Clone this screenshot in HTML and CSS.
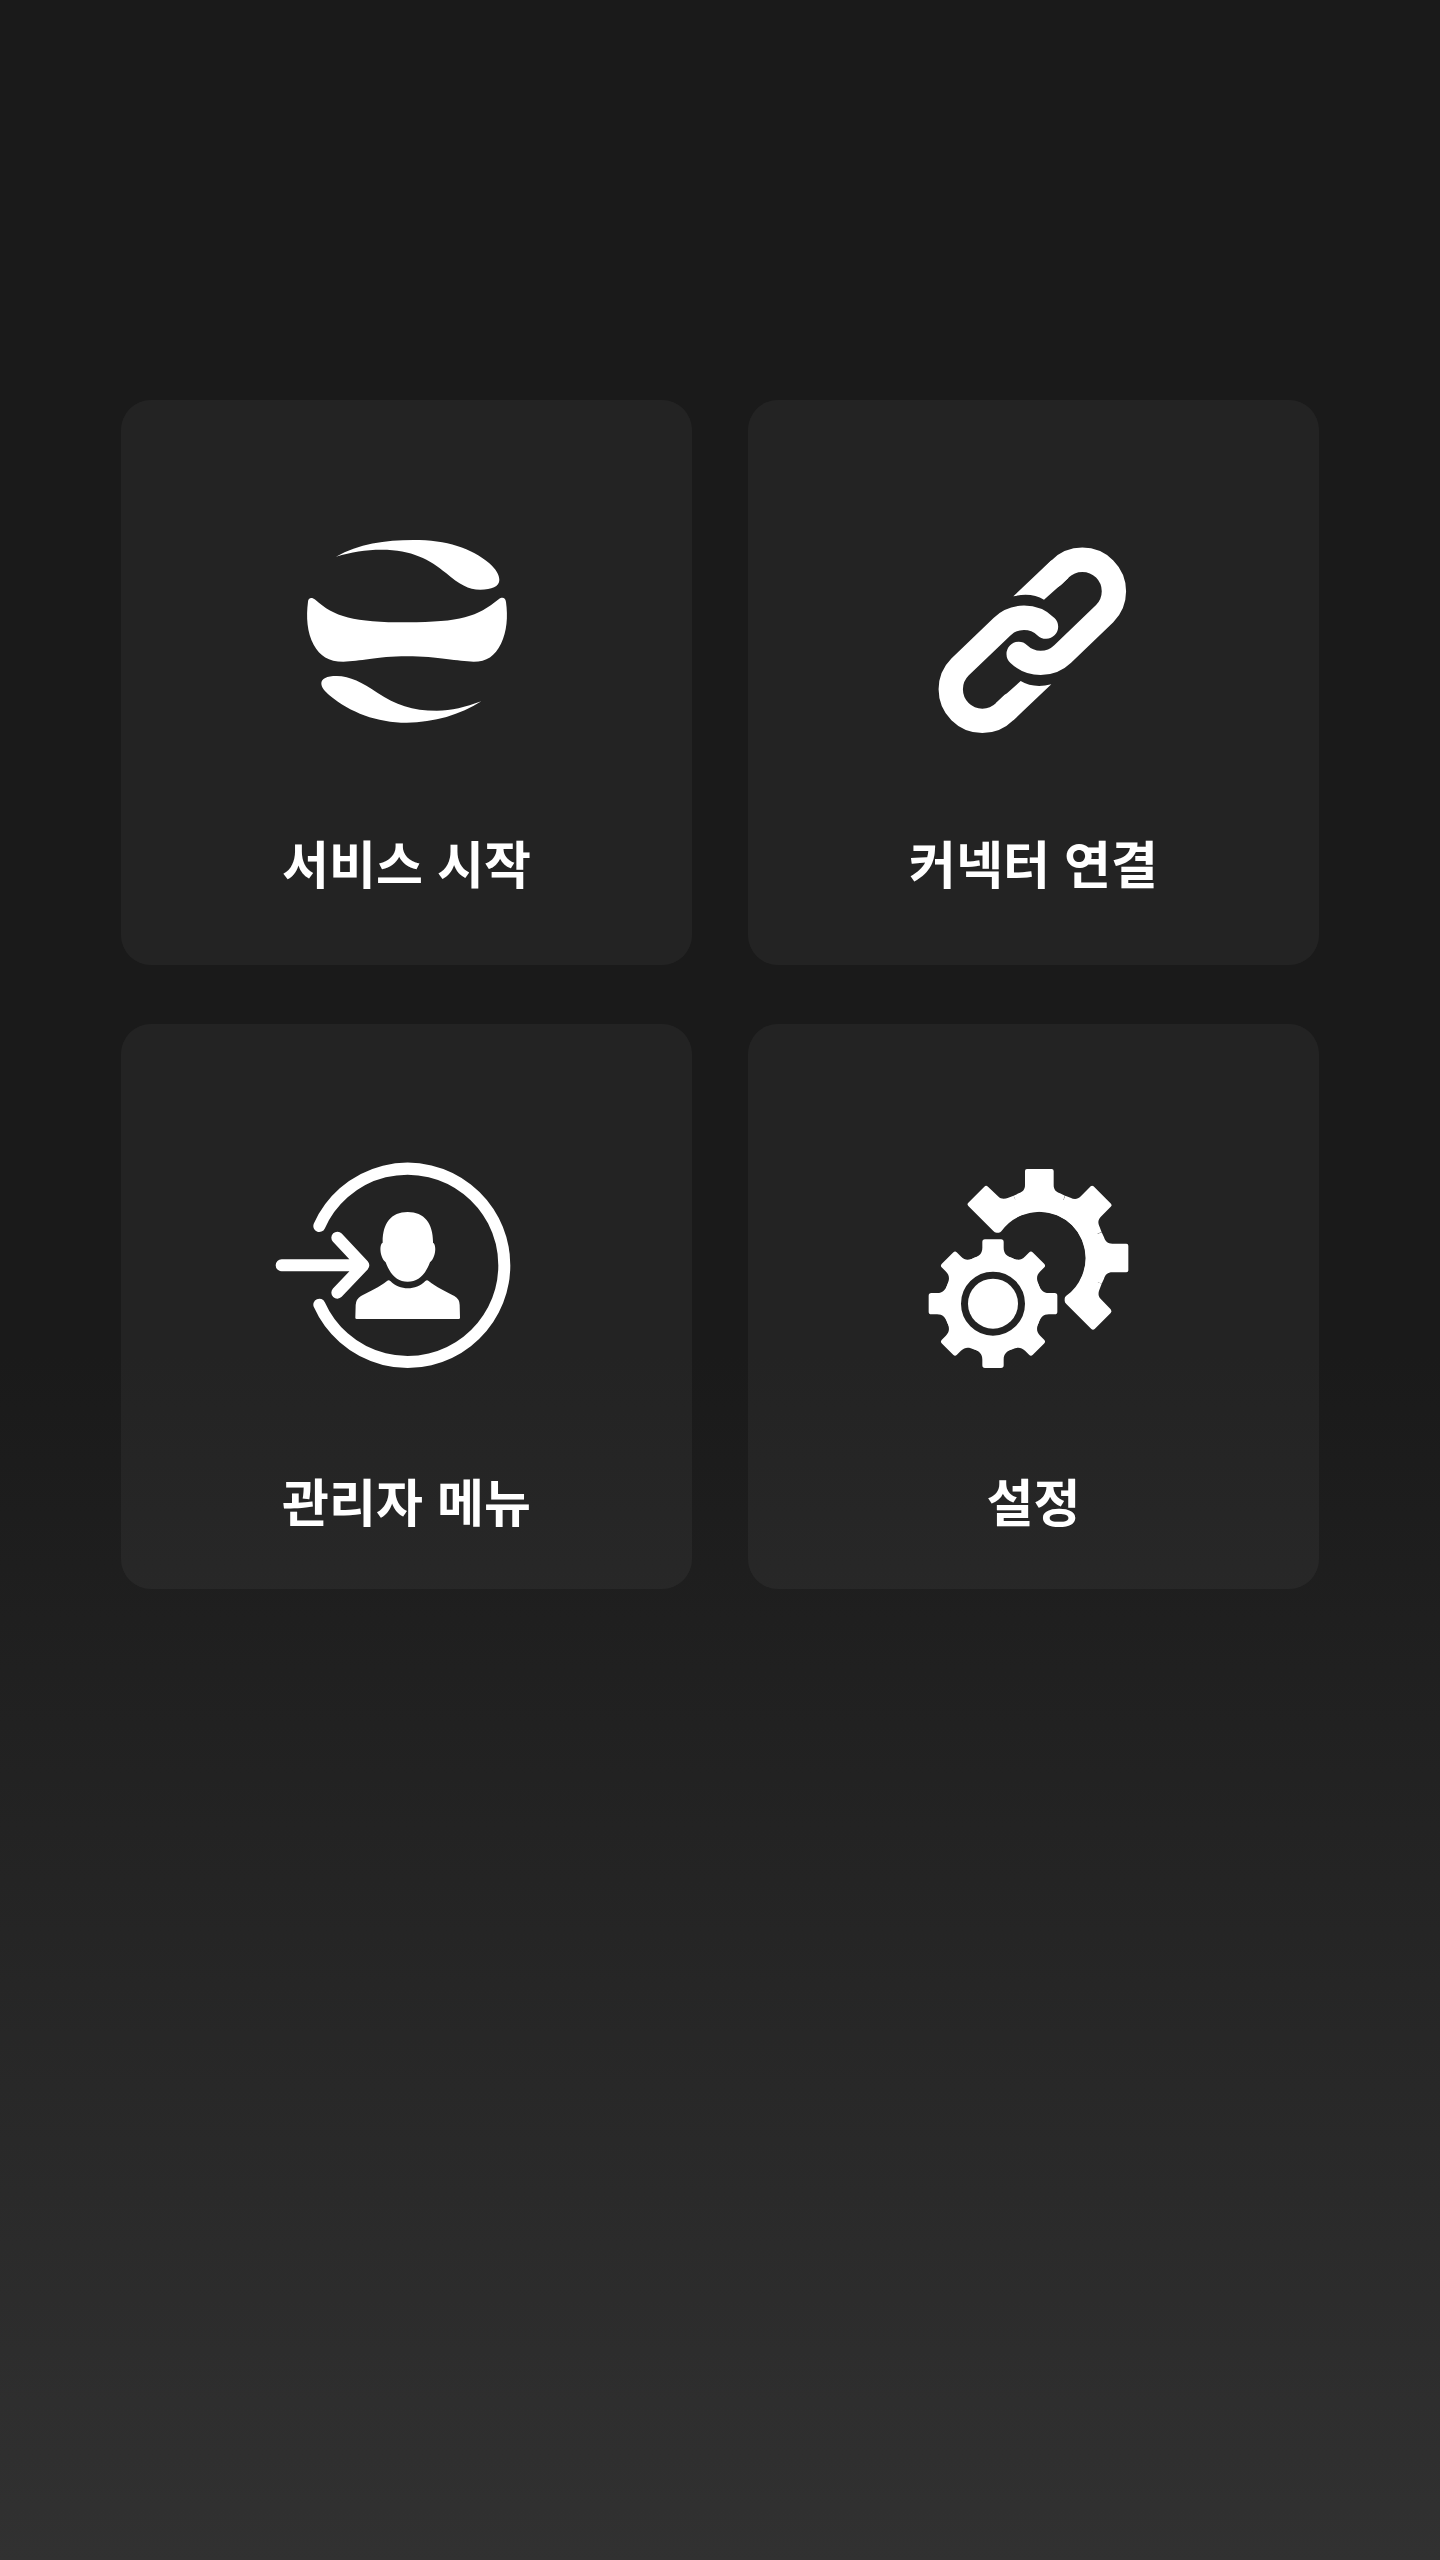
FILE: index.html
```html
<!DOCTYPE html>
<html lang="ko">
<head>
<meta charset="utf-8">
<meta name="viewport" content="width=device-width, initial-scale=1">
<title>메뉴</title>
<link rel="stylesheet" href="styles.css">
</head>
<body>
<main class="menu">
  <button class="card" type="button">
    <svg class="icon" viewBox="-102 0 903 720" aria-hidden="true">
      <path d="M138 110C205 72 285 60 370 60C470 60 545 84 598 130C618 148 628 165 628 180C628 200 605 209 571 209C535 209 508 193 468 159C420 119 365 89 275 89C225 89 185 96 138 110Z"/>
      <path d="M54 245C55 233 65 231 76 239C132 290 190 307 351 307C512 307 562 290 626 238C637 230 646 233 648 246C654 290 651 334 633 371C615 408 590 425 551 425C505 425 445 409 351 409C257 409 210 425 160 425C115 425 90 408 71 374C51 337 48 290 54 245Z"/>
      <path d="M94 490C94 476 110 468 140 468C181 468 216 488 262 518C318 554 365 572 441 572C485 572 525 562 574 544C511 584 433 608 350 608C260 608 181 577 120 527C103 513 94 502 94 490Z"/>
    </svg>
    <span class="label">서비스 시작</span>
  </button>
  <button class="card" type="button">
    <svg class="icon" viewBox="-111 -30 903 720" aria-hidden="true">
      <defs>
        <g id="chain">
          <path d="M280 199L394 91L446 143L372 209Q334 186 280 199Z"/>
          <path class="line chain-line" d="M400 137L420 117A94 94 0 0 1 554 251L428 372A95 95 0 0 1 296 372"/>
        </g>
      </defs>
      <use href="#chain"/>
      <use href="#chain" transform="rotate(180 337 331)"/>
    </svg>
    <span class="label">커넥터 연결</span>
  </button>
  <button class="card card-low" type="button">
    <svg class="icon" viewBox="-12 -3 903 720" aria-hidden="true">
      <path class="line ring-line" d="M178 243A290 290 0 1 1 178 479M65 361H300M232 278L310 361L232 443"/>
      <path d="M443 201C494 201 520 237 519 293C530 298 528 338 510 352C496 389 475 410 443 410C411 410 391 389 377 352C359 338 357 298 368 293C367 237 392 201 443 201Z"/>
      <path d="M381 408Q386 404 391 408C419 437 468 437 496 408Q501 404 506 408C529 427 556 438 583 453Q599 462 599 480L600 518Q600 522 596 522H290Q286 522 286 518L287 480Q288 462 303 453C330 438 358 427 381 408Z"/>
    </svg>
    <span class="label">관리자 메뉴</span>
  </button>
  <button class="card card-low" type="button">
    <svg class="icon" viewBox="-81 -18 903 720" aria-hidden="true">
      <defs>
        <path id="tooth" d="M-57 -137C-42 -143 -32 -150 -32 -168V-185Q-32 -193 -24 -193H24Q32 -193 32 -185V-168C32 -150 42 -143 57 -137L45 -108H-45Z"/>
        <path id="big-tooth" d="M-77 -187L-62 -194C-50 -198 -43 -205 -43 -219V-261Q-43 -267 -37 -267H37Q43 -267 43 -261V-219C43 -205 50 -198 62 -194L77 -187L53 -128A139 139 0 0 0 -53 -128Z"/>
        <path id="gear-end" d="M-138 -81L-213 -156Q-218 -161 -213 -166L-165 -214Q-160 -219 -154 -214L-124 -185C-114 -175 -103 -177 -93 -181L-77 -187L-53 -128A139 139 0 0 0 -114 -80Q-117 -76 -122 -76H-128Q-134 -76 -138 -81Z"/>
      </defs>
      <g transform="translate(388 324)">
        <use href="#gear-end"/>
        <use href="#big-tooth"/>
        <use href="#big-tooth" transform="rotate(45)"/>
        <use href="#big-tooth" transform="rotate(90)"/>
        <use href="#gear-end" transform="matrix(0 -1 -1 0 0 0)"/>
        <path class="line big-gear-line" d="M-82 -143A165 165 0 0 1 143 82"/>
      </g>
      <g transform="translate(249 461)">
        <use href="#tooth"/>
        <use href="#tooth" transform="rotate(45)"/>
        <use href="#tooth" transform="rotate(90)"/>
        <use href="#tooth" transform="rotate(135)"/>
        <use href="#tooth" transform="rotate(180)"/>
        <use href="#tooth" transform="rotate(225)"/>
        <use href="#tooth" transform="rotate(270)"/>
        <use href="#tooth" transform="rotate(315)"/>
        <circle class="line gear-line" r="122"/>
        <circle r="75"/>
      </g>
    </svg>
    <span class="label">설정</span>
  </button>
</main>
</body>
</html>
```
FILE: styles.css
```css
* {
  box-sizing: border-box;
}

body {
  margin: 0;
  min-height: 100vh;
  background: linear-gradient(#1a1a1a 53%, #313131);
  font-family: "Noto Sans CJK KR", sans-serif;
}

.menu {
  display: grid;
  grid-template-columns: 1fr 1fr;
  gap: 59px 56px;
  padding: 400px 121px 0;
}

.card {
  display: flex;
  flex-direction: column;
  align-items: center;
  justify-content: flex-start;
  gap: 72px;
  min-height: 565px;
  padding: 120px 0 0;
  border: 0;
  border-radius: 30px;
  background: rgba(255, 255, 255, 0.043);
  color: #fff;
  font: inherit;
  cursor: pointer;
}

.card-low {
  gap: 86px;
}

.icon {
  width: 301px;
  height: 240px;
  fill: currentColor;
}

.label {
  font-size: 51px;
  font-weight: 700;
  line-height: 60px;
}

.line {
  fill: none;
  stroke: currentColor;
  stroke-linecap: round;
}

.chain-line {
  stroke-width: 73px;
}

.ring-line {
  stroke-width: 36px;
  stroke-linejoin: round;
}

.gear-line {
  stroke-width: 52px;
}

.big-gear-line {
  stroke-width: 50px;
  stroke-linecap: butt;
}
```
